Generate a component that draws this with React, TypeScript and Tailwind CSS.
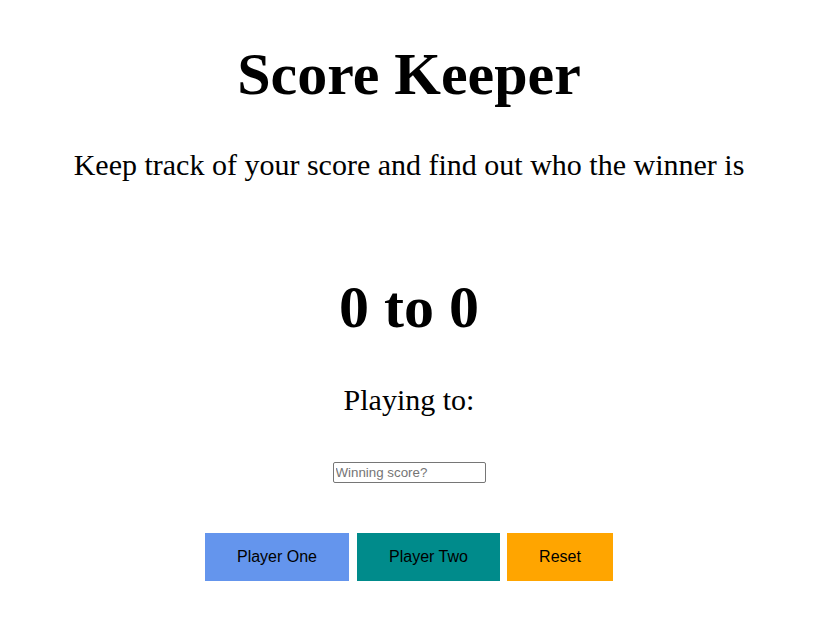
export default function App() {
  return (
    <div className="min-h-[634px] w-full bg-white pr-[11px] flex flex-col items-center text-black">
      <h1 className="mt-[44px] text-[60px] leading-none font-bold font-['Liberation_Serif',serif]">Score Keeper</h1>
      <p className="mt-[46px] text-[30px] leading-none font-['Liberation_Serif',serif]">Keep track of your score and find out who the winner is</p>
      <h2 className="mt-[97px] text-[60px] leading-none font-bold font-['Liberation_Serif',serif]">0 to 0</h2>
      <p className="mt-[48px] text-[30px] leading-none font-['Liberation_Serif',serif]">Playing to:</p>
      <input
        type="number"
        placeholder="Winning score?"
        className="mt-[47px] w-[153px] h-[21px] border border-[#767676] rounded-[2px] px-[2px] text-[13.33px] font-['Liberation_Sans',Arial,sans-serif] placeholder:text-[#757575] outline-none"
      />
      <div className="mt-[50px] flex">
        <button className="h-12 w-[144px] bg-[#6495ED] text-[16px] font-['Liberation_Sans',Arial,sans-serif] text-black">Player One</button>
        <button className="ml-2 h-12 w-[143px] bg-[#008B8B] text-[16px] font-['Liberation_Sans',Arial,sans-serif] text-black">Player Two</button>
        <button className="ml-[7px] h-12 w-[106px] bg-[#FFA500] text-[16px] font-['Liberation_Sans',Arial,sans-serif] text-black">Reset</button>
      </div>
    </div>
  );
}
